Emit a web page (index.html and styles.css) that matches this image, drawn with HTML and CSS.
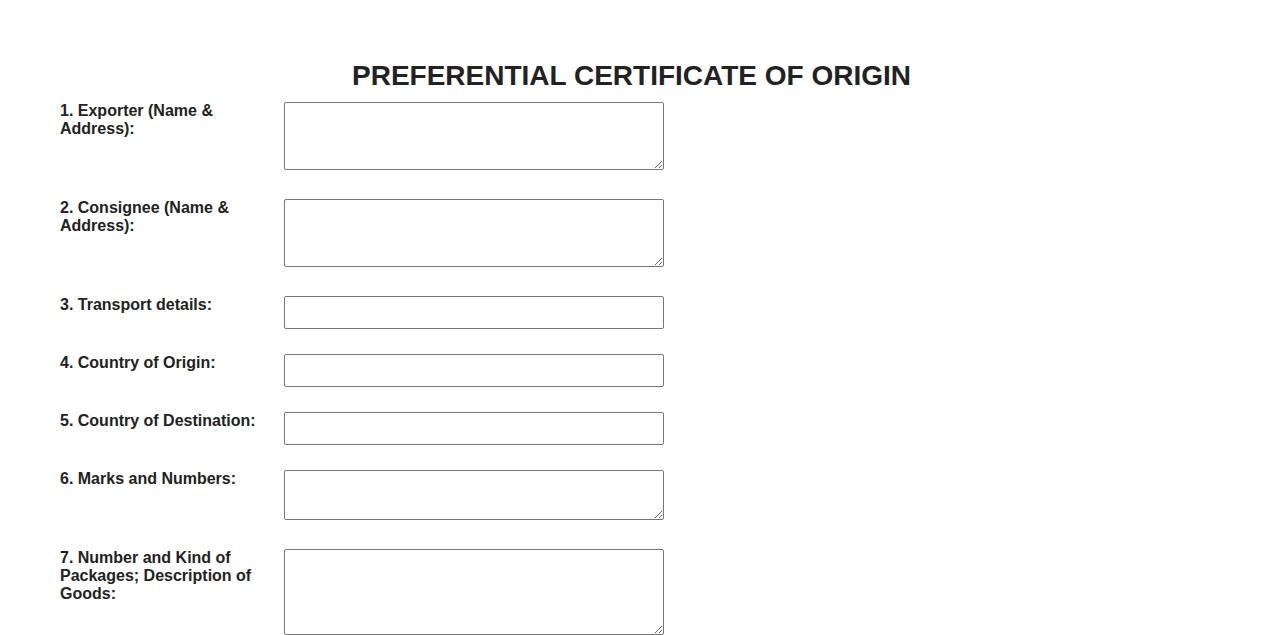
FILE: index.html
```html
<!DOCTYPE html>
<html lang="en">
<head>
<meta charset="utf-8">
<title>Preferential Certificate of Origin</title>
<link rel="stylesheet" href="styles.css">
</head>
<body>
<div class="page">
  <h1 class="title">PREFERENTIAL CERTIFICATE OF ORIGIN</h1>
  <form class="form">
    <div class="row row--area">
      <label class="label" for="f1">1. Exporter (Name &amp; Address):</label>
      <textarea id="f1" class="field area area--md"></textarea>
    </div>
    <div class="row row--area">
      <label class="label" for="f2">2. Consignee (Name &amp; Address):</label>
      <textarea id="f2" class="field area area--md"></textarea>
    </div>
    <div class="row">
      <label class="label" for="f3">3. Transport details:</label>
      <input id="f3" class="field input" type="text">
    </div>
    <div class="row">
      <label class="label" for="f4">4. Country of Origin:</label>
      <input id="f4" class="field input" type="text">
    </div>
    <div class="row">
      <label class="label" for="f5">5. Country of Destination:</label>
      <input id="f5" class="field input" type="text">
    </div>
    <div class="row row--area">
      <label class="label" for="f6">6. Marks and Numbers:</label>
      <textarea id="f6" class="field area area--sm"></textarea>
    </div>
    <div class="row row--area">
      <label class="label" for="f7">7. Number and Kind of Packages; Description of Goods:</label>
      <textarea id="f7" class="field area area--lg"></textarea>
    </div>
  </form>
</div>
</body>
</html>
```
FILE: styles.css
```css
html, body {
  margin: 0;
  padding: 0;
  background: #ffffff;
}

body {
  font-family: "Liberation Sans", Arial, sans-serif;
  color: #222222;
}

.page {
  padding: 60px 60px 0 60px;
}

.title {
  margin: 0 0 10px 0;
  font-size: 28px;
  line-height: 32px;
  font-weight: bold;
  text-align: center;
  color: #222222;
}

.form {
  display: flex;
  flex-direction: column;
}

.row {
  display: flex;
  align-items: flex-start;
  margin-bottom: 25px;
}

.row--area {
  margin-bottom: 29px;
}

.label {
  width: 200px;
  margin-right: 24px;
  font-size: 16px;
  line-height: 18px;
  font-weight: bold;
  color: #222222;
  flex-shrink: 0;
}

.field {
  box-sizing: border-box;
  width: 380px;
  margin: 0;
  border: 1px solid #767676;
  border-radius: 2px;
  background: #ffffff;
  font-family: "Liberation Sans", Arial, sans-serif;
  font-size: 14px;
  padding: 4px 6px;
}

.input {
  height: 33px;
}

.area {
  resize: vertical;
  display: block;
}

.area--md {
  height: 68px;
}

.area--sm {
  height: 50px;
}

.area--lg {
  height: 86px;
}
```
